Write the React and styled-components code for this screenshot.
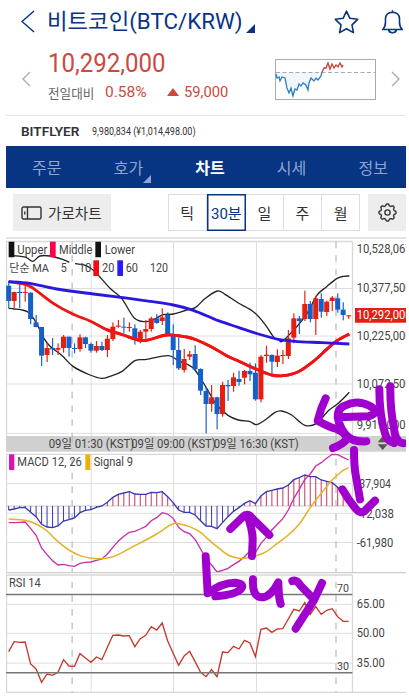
import React from 'react';
import styled, { createGlobalStyle } from 'styled-components';

const GlobalStyle = createGlobalStyle`
  * { box-sizing: border-box; }
  body { margin: 0; background: #fff; overflow: hidden; }
  button { font: inherit; color: inherit; background: none; border: 0; padding: 0; }
`;

const NAVY = '#083484';
const RED = '#cb4a40';

const Screen = styled.main`
  width: 400px;
  height: 698px;
  margin-left: 6px;
  background: #fff;
  overflow: hidden;
  font-family: Roboto, 'Noto Sans CJK KR', sans-serif;
  color: #333;
  white-space: nowrap;
`;
const Squeeze = styled.span`
  display: inline-block;
  transform: scaleX(${(p) => p.$by});
  transform-origin: left center;
`;
const TitleBar = styled.header`
  display: flex;
  height: 46px;
  padding: 10px 2px 0 15px;
  color: ${NAVY};
`;
const Title = styled.h1`
  display: flex;
  width: 209px;
  margin: -3px auto 0 12px;
  font-size: 22px;
  line-height: 30px;
  font-weight: 400;
`;
const TitleName = styled.span`
  width: 199px;
`;
const Corner = styled.svg`
  flex: none;
  width: 9px;
  height: 9px;
  margin-top: 17px;
  fill: currentColor;
`;
const LineIcon = styled.svg`
  flex: none;
  fill: none;
  stroke: currentColor;
  stroke-width: ${(p) => p.$weight || 1.4};
`;
const TitleActions = styled.div`
  display: flex;
  gap: 22px;
`;
const Quote = styled.section`
  display: flex;
  height: 70px;
  padding-left: 16px;
  border-bottom: 1px solid #e4e4e4;
`;
const Arrow = styled(LineIcon)`
  color: #aaa;
  margin-top: 25px;
`;
const Figures = styled.div`
  width: 228px;
  margin-left: 17px;
`;
const Price = styled.div`
  height: 34px;
  font-size: 26px;
  line-height: 35px;
  color: ${RED};
`;
const Change = styled.div`
  display: flex;
  align-items: center;
  height: 24px;
  font-size: 15.5px;
  color: ${RED};
`;
const ChangeLabel = styled.span`
  width: 57px;
  font-size: 13px;
  color: #666;
`;
const Percent = styled.span`
  width: 62px;
`;
const UpMark = styled.span`
  border: 6px solid transparent;
  border-top: 0;
  border-bottom: 8px solid ${RED};
  margin-right: 5px;
`;
const Spark = styled.svg`
  width: 101px;
  height: 41px;
  margin: 13px 15px 0 -1px;
  flex: none;
  fill: none;
`;
const Exchange = styled.section`
  display: flex;
  align-items: center;
  height: 30px;
  padding: 1px 15px 0;
  font-size: 10px;
`;
const ExchangeName = styled.strong`
  width: 71px;
  font-size: 13.2px;
  font-weight: 600;
`;
const Tabs = styled.nav`
  display: flex;
  height: 42px;
  padding-bottom: 1px;
  background: ${NAVY};
  color: #8fa5cf;
  font-size: 16px;
`;
const Tab = styled.button`
  display: flex;
  flex: 0 0 81.6px;
  justify-content: center;
  align-items: center;
  color: ${(p) => (p.$active ? '#fff' : 'inherit')};
  font-weight: ${(p) => (p.$active ? 700 : 400)};
`;
const TabCorner = styled(Corner)`
  width: 8px;
  height: 8px;
  margin: 24px -8px 0 0;
`;
const Toolbar = styled.section`
  display: flex;
  height: 51px;
  padding: 6px 0 0 7px;
  border-bottom: 2px solid #e4e4e4;
  font-size: 15px;
`;
const WideChart = styled.button`
  display: flex;
  align-items: center;
  gap: 6px;
  width: 98px;
  height: 37px;
  padding-left: 8px;
  background: #ededed;
  font-size: 14.6px;
`;
const Periods = styled.div`
  display: flex;
  width: 193px;
  height: 37px;
  margin: 0 8px 0 57px;
  border: 1px solid #dedede;
`;
const Period = styled.button`
  flex: 1;
  margin: ${(p) => (p.$active ? '-1px 0' : '0')};
  border-style: solid;
  border-width: ${(p) => (p.$active ? '1px' : p.$last ? '0' : '0 1px 0 0')};
  border-color: ${(p) => (p.$active ? NAVY : '#dedede')};
  box-shadow: ${(p) => (p.$active ? `inset 0 0 0 0.5px ${NAVY}` : 'none')};
  color: ${(p) => (p.$active ? NAVY : '#333')};
`;
const Settings = styled.button`
  display: flex;
  align-items: center;
  justify-content: center;
  width: 38px;
  height: 37px;
  background: #ededed;
`;
const Charts = styled.section`
  position: relative;
  display: flex;
  flex-direction: column;
`;
const Pane = styled.svg`
  display: block;
  width: 400px;
  height: ${(p) => p.$height}px;
  fill: none;
  font-family: Roboto, 'Noto Sans CJK KR', sans-serif;
`;
const Ink = styled.svg`
  position: absolute;
  inset: 0;
  width: 400px;
  height: 454px;
  fill: none;
  stroke: #a000cd;
  stroke-width: 24;
  stroke-linecap: round;
  stroke-linejoin: round;
`;

/* Pane units are thirds of a pixel; one bar is 16.5 units wide. */
const barX = (i) => 26 + i * 16.45;
const path = (pts) => 'M' + pts.map((p) => p.join(' ')).join('L');
const series = (values) => path(values.map((v, i) => [barX(i), v]));
const smooth = (p) => {
  let d = `M${p[0].join(' ')}`;
  for (let i = 0; i < p.length - 1; i++) {
    const a = p[i - 1] || p[i], b = p[i], c = p[i + 1], e = p[i + 2] || c;
    d += `C${b[0] + (c[0] - a[0]) / 6} ${b[1] + (c[1] - a[1]) / 6} ${c[0] - (e[0] - b[0]) / 6} ${c[1] - (e[1] - b[1]) / 6} ${c[0]} ${c[1]}`;
  }
  return d;
};

/* high, body top, body bottom, low, rising */
const candles = [
  [138, 152, 198, 220, 0], [170, 171, 198, 220, 1], [145, 171, 174, 219, 0], [145, 171, 174, 200, 1],
  [172, 173, 252, 268, 0], [240, 262, 276, 277, 0], [276, 276, 362, 393, 0], [323, 339, 360, 381, 1],
  [309, 339, 343, 360, 0], [325, 339, 344, 360, 1], [300, 305, 339, 353, 1], [305, 305, 339, 365, 0],
  [325, 339, 342, 355, 0], [298, 307, 342, 350, 1], [305, 307, 327, 339, 0], [323, 327, 347, 353, 0],
  [318, 333, 347, 353, 1], [320, 333, 345, 348, 0], [300, 311, 345, 366, 1], [262, 275, 312, 318, 1],
  [255, 272, 275, 278, 1], [248, 275, 278, 295, 0], [262, 276, 279, 290, 1], [268, 280, 315, 329, 0],
  [285, 290, 316, 325, 1], [255, 282, 290, 318, 1], [245, 250, 282, 290, 1], [237, 250, 264, 266, 0],
  [220, 247, 258, 270, 1], [232, 240, 298, 300, 0], [268, 298, 345, 390, 0], [305, 345, 400, 405, 0],
  [342, 372, 405, 413, 1], [348, 358, 365, 375, 1], [331, 357, 403, 405, 0], [400, 402, 467, 480, 0],
  [455, 468, 507, 595, 0], [450, 487, 507, 530, 1], [485, 487, 537, 583, 0], [440, 450, 537, 545, 1],
  [435, 450, 454, 498, 0], [413, 427, 453, 470, 1], [407, 432, 441, 452, 0], [405, 408, 428, 448, 1],
  [383, 408, 418, 438, 0], [385, 413, 493, 497, 0], [360, 365, 493, 502, 1], [332, 359, 363, 383, 1],
  [358, 360, 380, 415, 0], [343, 362, 381, 396, 1], [345, 360, 363, 387, 1], [285, 310, 363, 372, 1],
  [235, 250, 308, 325, 1], [243, 250, 258, 297, 0], [167, 207, 252, 258, 1], [198, 207, 252, 262, 0],
  [182, 190, 252, 300, 1], [175, 192, 230, 248, 0], [197, 200, 231, 243, 1], [183, 188, 198, 228, 1],
  [175, 190, 224, 233, 0], [202, 224, 240, 256, 0], [240, 241, 244, 252, 1],
];
const upperBand = [[38, 62], [78, 67], [98, 79], [120, 63], [150, 63], [190, 74], [208, 82]];
const upperBand2 = [[225, 86], [258, 92], [285, 110], [330, 160], [365, 190], [402, 248], [435, 260], [460, 254], [490, 239], [520, 237], [560, 225], [587, 217], [616, 190], [652, 168], [675, 178], [715, 204], [760, 230], [795, 268], [820, 305], [835, 314], [852, 315], [915, 245], [950, 182], [980, 155], [1010, 131], [1030, 124], [1048, 123]];
const lowerBand = [[26, 220], [42, 222], [62, 224], [85, 232], [108, 262], [132, 310], [150, 334], [185, 361], [220, 395], [270, 420], [305, 430], [330, 424], [365, 410], [405, 377], [440, 373], [505, 362], [535, 377], [560, 387], [585, 405], [620, 460], [650, 510], [685, 542], [715, 555], [750, 560], [769, 569], [795, 555], [825, 532], [845, 528], [875, 540], [915, 571], [950, 565], [985, 527], [1015, 505], [1048, 472]];
const ma20 = [[26, 140], [75, 148], [100, 160], [160, 205], [220, 238], [270, 258], [320, 284], [370, 300], [430, 317], [500, 300], [560, 306], [590, 315], [635, 336], [680, 362], [720, 380], [765, 401], [815, 420], [850, 422], [895, 410], [945, 375], [980, 343], [1010, 318], [1048, 297]];
const ma60 = [[26, 140], [90, 145], [170, 162], [280, 177], [370, 188], [450, 199], [520, 210], [580, 226], [655, 257], [715, 277], [775, 297], [835, 313], [885, 319], [965, 323], [1048, 327]];
const histogram = [180, 177, 173, 172, 187, 200, 223, 231, 233, 228, 213, 209, 204, 188, 181, 179, 172, 168, 157, 142, 133, 129, 125, 132, 133, 133, 127, 128, 125, 140, 158, 180, 187, 187, 195, 212, 228, 229, 236, 218, 200, 184, 173, 160, 152, 161, 138, 125, 121, 117, 114, 105, 89, 83, 75, 80, 80, 90, 94, 98, 112, 127];
const macd = [218, 218, 217, 216, 235, 256, 294, 314, 332, 345, 343, 347, 349, 340, 337, 336, 331, 327, 312, 292, 273, 259, 247, 244, 237, 229, 212, 203, 188, 192, 205, 232, 245, 251, 268, 297, 325, 345, 366, 361, 355, 344, 334, 320, 303, 308, 280, 262, 240, 223, 206, 180, 145, 118, 88, 72, 48, 38, 25, 13, 14, 22, 30];
const signal = [[0, 207], [3, 211], [5, 222], [7, 243], [9, 275], [11, 300], [13, 317], [15, 325], [17, 326], [19, 320], [21, 305], [23, 287], [25, 270], [27, 252], [29, 230], [30, 221], [31, 221], [33, 230], [35, 247], [36, 262], [38, 290], [40, 315], [42, 325], [43, 325], [45, 318], [47, 305], [49, 280], [51, 255], [53, 222], [55, 173], [57, 130], [59, 90], [60, 75], [61, 61], [62, 53]].map(([i, y]) => [barX(i), y]);
const rsi = [245, 215, 217, 216, 282, 297, 337, 312, 316, 307, 269, 288, 289, 251, 264, 277, 261, 269, 232, 196, 195, 198, 197, 230, 206, 196, 170, 180, 159, 213, 250, 286, 258, 244, 275, 307, 320, 299, 320, 246, 248, 229, 237, 211, 219, 260, 178, 174, 187, 177, 176, 147, 118, 123, 98, 133, 109, 133, 121, 116, 140, 154, 154];

const Label = ({ x, y, w, size = 36, fill = '#444', children }) => (
  <text x={x} y={y} fontSize={size} fill={fill} textLength={w} lengthAdjust="spacingAndGlyphs">{children}</text>
);

const Grid = ({ top, bottom, rows, dash }) => (
  <>
    <path stroke="#dedede" strokeWidth="3" d={`M273.5 ${top}V${bottom}M520.5 ${top}V${bottom}M769.5 ${top}V${bottom}` + rows.map((y) => `M18 ${y}H1057`).join('')} />
    <path stroke="#d8d8d8" strokeWidth="4" d={`M19.5 ${top}V${bottom}M1057.5 ${top}V${bottom}M18 ${top}H1057`} />
    <path stroke="#ccc" strokeWidth="5" strokeDasharray="20 21" strokeDashoffset={dash} d={`M216.5 ${top}V${bottom}M1008 ${top}V${bottom}`} />
  </>
);

const PricePane = () => (
  <Pane $height={197} viewBox="18 12 1200 591">
    <Grid top={19.5} bottom={603} rows={[160.5, 303, 447, 595]} dash={0} />
    <path stroke="#222" strokeWidth="4" d={smooth(upperBand) + smooth(upperBand2) + smooth(lowerBand)} />
    <path stroke="#f01414" strokeWidth="8.5" d={smooth(ma20)} />
    {candles.map(([h, t, b, l, up], i) => (
      <g key={i} fill={up ? '#e61e10' : '#1560c8'}>
        <rect x={barX(i) - 1.5} y={h} width="3.5" height={l - h} />
        <rect x={barX(i) - 7.5} y={t} width="15" height={Math.max(b - t, 3)} />
      </g>
    ))}
    <path stroke="#f01414" strokeWidth="8.5" d={smooth(ma20.slice(6))} />
    <path stroke="#2a18e0" strokeWidth="8.5" d={smooth(ma60)} />
    <path fill="#111" d="M26 20h17v47H26zM286 20h17v47h-17z" />
    <path fill="#ff0048" d="M150 20h17v47h-17z" />
    <path fill="#f40b0b" d="M280 76h17v47h-17z" />
    <path fill="#2a18ff" d="M352 76h17v47h-17z" />
    <Label x={52} y={56} w={90}>Upper</Label>
    <Label x={177} y={56} w={100}>Middle</Label>
    <Label x={314} y={56} w={91}>Lower</Label>
    <Label x={28} y={111} w={119} size={34}>단순 MA</Label>
    <Label x={182} y={111} w={18}>5</Label>
    <Label x={236} y={111} w={38}>10</Label>
    <Label x={306} y={111} w={37}>20</Label>
    <Label x={377} y={111} w={37}>60</Label>
    <Label x={450} y={111} w={54}>120</Label>
    <Label x={1070} y={55} w={165}>10,528,067</Label>
    <Label x={1070} y={172} w={165}>10,377,500</Label>
    <Label x={1070} y={316} w={165}>10,225,000</Label>
    <Label x={1070} y={459} w={165}>10,072,500</Label>
    <Label x={1070} y={581} w={147}>9,919,000</Label>
    <path fill="#e61e10" d="M1065 219h155v44h-155z" />
    <Label x={1070} y={253} w={165} fill="#fff">10,292,000</Label>
  </Pane>
);

const TimePane = () => (
  <Pane $height={16} viewBox="18 288 1200 48">
    <path fill="#d0d0d0" d="M18 288h1200v47H18z" />
    <path stroke="#bdbdbd" strokeWidth="4" d="M216.5 288V308M1008 288V308" />
    <Label x={146} y={323} w={257}>09일 01:30 (KST)</Label>
    <Label x={394} y={323} w={253}>09일 09:00 (KST)</Label>
    <Label x={641} y={323} w={255}>09일 16:30 (KST)</Label>
    <path fill="#555" d="M1133 307l15-18 15 18zM1133 313h30l-15 17z" />
  </Pane>
);

const MacdPane = () => (
  <Pane $height={120} viewBox="18 6 1200 360">
    <Grid top={13} bottom={366} rows={[100.5, 190, 277.5]} dash={27} />
    <path stroke="#c9c9c9" strokeWidth="3" d="M18 168H1057" />
    {histogram.map((v, i) => (
      <path key={i} stroke={v < 168 ? '#c94466' : '#4340ba'} strokeWidth="3.2" d={`M${barX(i)} 168V${v}`} />
    ))}
    <path stroke="#3737b4" strokeWidth="4" d={series(histogram)} />
    <path stroke="#c92eab" strokeWidth="4" d={series(macd)} />
    <path stroke="#e5b126" strokeWidth="4.5" d={smooth(signal)} />
    <path fill="#dc14b4" d="M27 13h16v47H27z" />
    <path fill="#eeb006" d="M256 13h15v47h-15z" />
    <Label x={52} y={49} w={193}>MACD 12, 26</Label>
    <Label x={281} y={49} w={118}>Signal 9</Label>
    <Label x={1078} y={114} w={95}>37,904</Label>
    <Label x={1070} y={203} w={112}>-12,038</Label>
    <Label x={1070} y={290} w={110}>-61,980</Label>
  </Pane>
);

const RsiPane = () => (
  <Pane $height={121} viewBox="18 6 1200 363">
    <Grid top={15} bottom={367} rows={[103, 190, 279.5]} dash={21} />
    <path stroke="#cecece" strokeWidth="6" d="M18 7H1218" />
    <path stroke="#ccc" strokeWidth="3" d="M18 367H1218" />
    <path stroke="#c4382c" strokeWidth="4" d={series(rsi)} />
    <path stroke="#777" strokeWidth="4.5" d="M18 73.5H1057M18 308.5H1057" />
    <Label x={27} y={52} w={95}>RSI 14</Label>
    <Label x={1011} y={66} w={36} size={34}>70</Label>
    <Label x={1011} y={301} w={36} size={34}>30</Label>
    <Label x={1070} y={114} w={84}>65.00</Label>
    <Label x={1070} y={202} w={84}>50.00</Label>
    <Label x={1070} y={291} w={84}>35.00</Label>
  </Pane>
);

const Handwriting = () => (
  <Ink viewBox="18 717 1200 1362">
    <path d="M977 1195Q962 1225 953 1262Q985 1280 1010 1287Q1040 1300 1040 1318Q1030 1332 999 1344" />
    <path d="M1013 1252L1105 1249Q1143 1238 1110 1218Q1070 1198 1034 1217Q1005 1230 1017 1268Q1032 1310 1060 1320Q1080 1325 1099 1324" />
    <path d="M1138 1168Q1138 1245 1155 1300Q1162 1324 1182 1329M1171 1159Q1170 1225 1182 1285Q1186 1328 1211 1330" />
    <path d="M1062 1350Q1062 1400 1068 1430L1080 1498M1027 1468Q1045 1500 1068 1527Q1083 1545 1098 1529L1125 1502" />
    <path d="M691 1587L728 1551Q742 1537 754 1552L808 1605M742 1545Q758 1590 758 1620L756 1668" />
    <path d="M617 1669L623 1780Q665 1748 705 1748Q737 1751 722 1768Q705 1784 646 1789" />
    <path d="M759 1738Q756 1790 784 1792Q812 1792 835 1747Q836 1795 842 1812" />
    <path d="M877 1743Q890 1738 902 1757L940 1796M966 1749L942 1800L887 1886" />
  </Ink>
);

const Chevron = ({ size: [w, h], right, as: As = LineIcon, weight }) => (
  <As $weight={weight} width={w} height={h} viewBox={`0 0 ${w} ${h}`}>
    <path d={right ? `M1 1L${w - 1} ${h / 2}L1 ${h - 1}` : `M${w - 1} 1L1 ${h / 2}L${w - 1} ${h - 1}`} />
  </As>
);

const gear = (() => {
  const pts = [];
  for (let k = 0; k < 96; k++) {
    const a = (k / 96) * Math.PI * 2;
    const r = 7.7 + 0.9 * Math.tanh(2.2 * Math.cos(8 * a));
    pts.push([(9.5 + r * Math.sin(a)).toFixed(2), (9.5 - r * Math.cos(a)).toFixed(2)]);
  }
  return path(pts) + 'Z';
})();

export default function App() {
  return (
    <Screen>
      <GlobalStyle />
      <TitleBar>
        <Chevron size={[14, 23]} weight={1.5} />
        <Title>
          <TitleName><Squeeze $by={1.015}>비트코인(BTC/KRW)</Squeeze></TitleName>
          <Corner viewBox="0 0 9 9"><path d="M9 0V9H0Z" /></Corner>
        </Title>
        <TitleActions>
          <LineIcon $weight={1.6} width="25" height="25" viewBox="0 0 25 25" strokeLinejoin="round">
            <path d="M12.5 1.2L15.9 8.3L23.7 9.3L18 14.8L19.4 22.6L12.5 18.8L5.6 22.6L7 14.8L1.3 9.3L9.1 8.3Z" />
          </LineIcon>
          <LineIcon $weight={1.6} width="23" height="25" viewBox="0 0 23 25" strokeLinejoin="round">
            <path d="M1.7 19.5Q4.5 17 4.5 12V8.5Q4.8 2.5 11.5 2.2Q18.2 2.5 18.5 8.5V12Q18.5 17 21.3 19.5ZM11.5 2V.3M7.5 19.8Q8.2 22.7 11.5 22.7Q14.8 22.7 15.5 19.8" />
          </LineIcon>
        </TitleActions>
      </TitleBar>

      <Quote>
        <Chevron size={[9, 16]} as={Arrow} weight={1.3} />
        <Figures>
          <Price><Squeeze $by={0.925}>10,292,000</Squeeze></Price>
          <Change>
            <ChangeLabel><Squeeze $by={0.97}>전일대비</Squeeze></ChangeLabel>
            <Percent>0.58%</Percent>
            <UpMark />
            <Squeeze $by={0.95}>59,000</Squeeze>
          </Change>
        </Figures>
        <Spark viewBox="0 0 101 41">
          <path fill="#eff7fc" d="M1 13H46L36 20L32 31L26 23L17 37L10 18L1 19Z" />
          <rect x=".5" y=".5" width="100" height="40" stroke="#aaa" />
          <path stroke="#aaa" strokeDasharray="4 2.5" d="M1 13.5H100" />
          <path stroke="#2b7fc4" strokeWidth="1.3" d="M1 15L2 19L4 18L5 22L7 18L10 19L12 29L14 34L16 29L18 37L20 30L22 31L24 25L26 27L28 24L31 26L33 31L34 24L36 19L39 22L41 19L43 21L46 17L47 13" />
          <path stroke="#cb3c38" strokeWidth="1.3" d="M47 13L49 9L51 9L53 4L55 10L57 5L59 9L61 6L63 8L65 4L67 8L68 6" />
        </Spark>
        <Chevron size={[9, 16]} right as={Arrow} weight={1.3} />
      </Quote>

      <Exchange>
        <ExchangeName><Squeeze $by={1.03}>BITFLYER</Squeeze></ExchangeName>
        <Squeeze $by={0.9}>9,980,834 (¥1,014,498.00)</Squeeze>
      </Exchange>

      <Tabs>
        <Tab>주문</Tab>
        <Tab>호가<TabCorner viewBox="0 0 9 9"><path d="M9 0V9H0Z" /></TabCorner></Tab>
        <Tab $active>차트</Tab>
        <Tab>시세</Tab>
        <Tab>정보</Tab>
      </Tabs>

      <Toolbar>
        <WideChart>
          <LineIcon width="21" height="14" viewBox="0 0 21 14">
            <rect x="1" y="1" width="19" height="12" rx="1.5" />
            <path d="M6.5 1V13M3.8 5.5V8.5" />
          </LineIcon>
          가로차트
        </WideChart>
        <Periods>
          <Period>틱</Period>
          <Period $active>30분</Period>
          <Period>일</Period>
          <Period>주</Period>
          <Period $last>월</Period>
        </Periods>
        <Settings>
          <LineIcon width="19" height="19" viewBox="0 0 19 19" strokeLinejoin="round">
            <path d={gear} />
            <circle cx="9.5" cy="9.5" r="2.6" />
          </LineIcon>
        </Settings>
      </Toolbar>

      <Charts>
        <PricePane />
        <TimePane />
        <MacdPane />
        <RsiPane />
        <Handwriting />
      </Charts>
    </Screen>
  );
}
